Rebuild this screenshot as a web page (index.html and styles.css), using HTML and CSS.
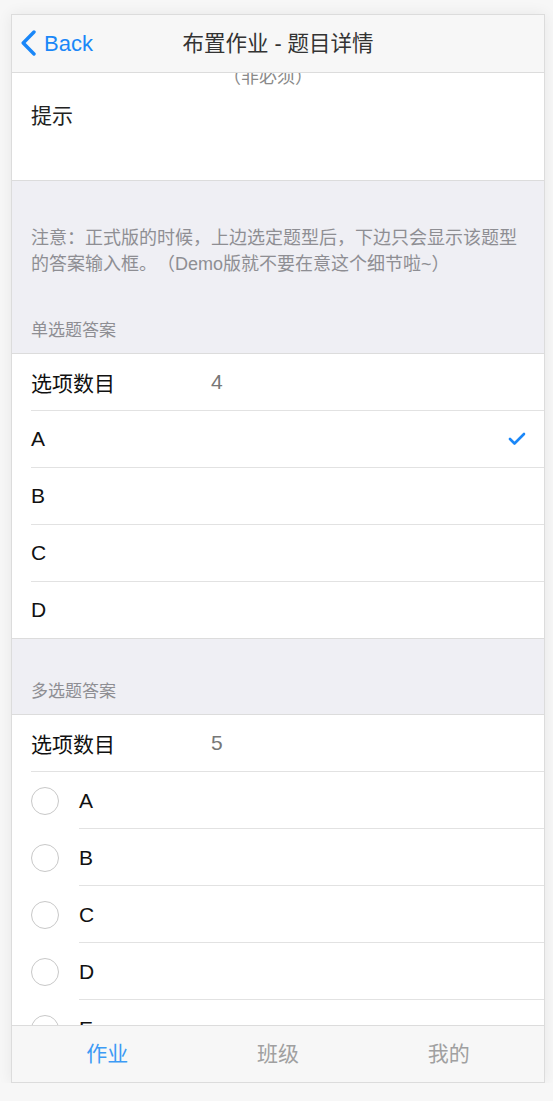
FILE: index.html
```html
<!DOCTYPE html>
<html lang="zh-CN">
<head>
<meta charset="utf-8">
<title>布置作业 - 题目详情</title>
<link rel="stylesheet" href="styles.css">
</head>
<body>
<div class="device">
  <header class="navbar">
    <a class="back">
      <svg class="chev" width="17" height="26" viewBox="0 0 17 26"><path d="M14 2 L3.2 13 L14 24" fill="none" stroke="#1a87f8" stroke-width="3.4" stroke-linecap="round" stroke-linejoin="round"/></svg>
      <span>Back</span>
    </a>
    <h1 class="title">布置作业 - 题目详情</h1>
  </header>

  <main class="content">
    <div class="scroll">
      <section class="tip-block">
        <div class="optional">（非必须）</div>
        <div class="tip">提示</div>
      </section>

      <div class="note">注意：正式版的时候，上边选定题型后，下边只会显示该题型的答案输入框。（Demo版就不要在意这个细节啦~）</div>

      <div class="section-header">单选题答案</div>
      <ul class="list">
        <li class="row"><span class="label">选项数目</span><span class="value">4</span></li>
        <li class="row"><span class="label">A</span>
          <svg class="check" width="18" height="14" viewBox="0 0 18 14"><path d="M2 7 L6.5 11.5 L16 2" fill="none" stroke="#1a87f8" stroke-width="2.6" stroke-linecap="round" stroke-linejoin="round"/></svg>
        </li>
        <li class="row"><span class="label">B</span></li>
        <li class="row"><span class="label">C</span></li>
        <li class="row"><span class="label">D</span></li>
      </ul>

      <div class="section-header">多选题答案</div>
      <ul class="list">
        <li class="row"><span class="label">选项数目</span><span class="value">5</span></li>
        <li class="crow"><span class="circle"></span><span class="cbody">A</span></li>
        <li class="crow"><span class="circle"></span><span class="cbody">B</span></li>
        <li class="crow"><span class="circle"></span><span class="cbody">C</span></li>
        <li class="crow"><span class="circle"></span><span class="cbody">D</span></li>
        <li class="crow"><span class="circle"></span><span class="cbody">E</span></li>
      </ul>
    </div>
  </main>

  <nav class="tabbar">
    <span class="tab active">作业</span>
    <span class="tab">班级</span>
    <span class="tab">我的</span>
  </nav>
</div>
</body>
</html>
```

FILE: styles.css
```css
* { box-sizing: border-box; }
html, body { margin: 0; padding: 0; }
body {
  background: #f7f7f7;
  font-family: "Liberation Sans", "Noto Sans CJK SC", sans-serif;
  color: #222;
  text-spacing-trim: space-all;
}
.device {
  margin: 14px 0 0 11px;
  width: 534px;
  height: 1069px;
  border: 1px solid #dcdcdc;
  background: #efeff4;
  box-shadow: 0 0 14px rgba(0,0,0,0.07);
  display: flex;
  flex-direction: column;
  overflow: hidden;
}
.navbar {
  height: 58px;
  flex: none;
  background: #f7f7f7;
  border-bottom: 1px solid #dcdcdc;
  display: grid;
  grid-template-columns: 1fr auto 1fr;
  align-items: center;
}
.back {
  grid-column: 1;
  grid-row: 1;
  display: flex;
  align-items: center;
  padding-left: 8px;
  color: #1a87f8;
  font-size: 22px;
  line-height: 30px;
}
.chev { display: block; margin-right: 7px; margin-top: -1px; }
.title {
  grid-column: 2;
  grid-row: 1;
  margin: 0;
  font-weight: normal;
  font-size: 21.5px;
  color: #333;
  line-height: 30px;
  white-space: nowrap;
}
.content {
  flex: 1;
  overflow: hidden;
  min-height: 0;
}
.scroll { margin-top: -8px; }
.tip-block {
  background: #fff;
  border-bottom: 1px solid #dcdcdc;
  height: 116px;
}
.optional {
  text-align: center;
  color: #8a8a8a;
  font-size: 18px;
  line-height: 24px;
  padding-right: 20px;
}
.tip {
  padding: 12px 19px 0;
  font-size: 21px;
  line-height: 30px;
  color: #222;
}
.note {
  padding: 44px 19px 0;
  margin-bottom: 1px;
  font-size: 18px;
  line-height: 26px;
  color: #8e8e93;
}
.section-header {
  padding: 41px 19px 10px;
  font-size: 17px;
  line-height: 24px;
  color: #8e8e93;
  border-bottom: 1px solid #dcdcdc;
}
.list {
  list-style: none;
  margin: 0;
  padding: 0;
  background: #fff;
  border-bottom: 1px solid #dcdcdc;
}
.row {
  margin-left: 19px;
  padding-right: 19px;
  height: 57px;
  border-bottom: 1px solid #e2e2e2;
  display: flex;
  align-items: center;
  font-size: 21px;
  color: #111;
}
.row:last-child { border-bottom: 0; height: 56px; }
.label { width: 180px; flex: none; }
.value { color: #777; }
.check { margin-left: auto; margin-right: -1px; }
.crow {
  display: flex;
  align-items: center;
  height: 57px;
}
.circle {
  flex: none;
  width: 28px;
  height: 28px;
  border: 1px solid #c8c8c8;
  border-radius: 50%;
  margin: 0 20px 0 19px;
}
.cbody {
  flex: 1;
  align-self: stretch;
  display: flex;
  align-items: center;
  border-bottom: 1px solid #e2e2e2;
  font-size: 21px;
  color: #111;
  margin-top: 1px;
}
.tabbar {
  flex: none;
  height: 57px;
  background: #f7f7f7;
  border-top: 1px solid #dcdcdc;
  display: grid;
  grid-template-columns: repeat(3, 1fr);
  padding: 0 10px;
  align-items: center;
}
.tab {
  text-align: center;
  font-size: 21px;
  color: #a0a0a0;
  line-height: 30px;
}
.tab.active { color: #3d9bf5; }
```
